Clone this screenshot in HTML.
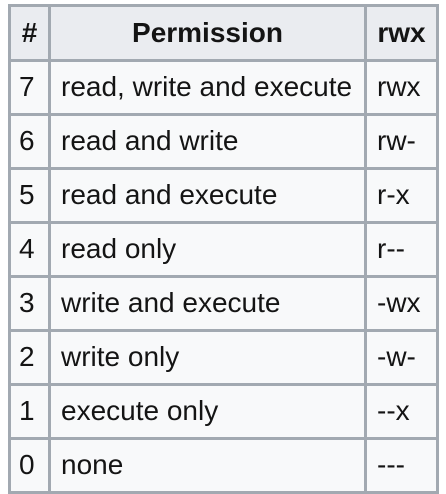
<!DOCTYPE html>
<html><head><style>
body{margin:0;background:#fff;width:446px;height:494px;position:relative;font-family:"Liberation Sans",sans-serif;color:#141414}
.t{position:absolute;left:8px;top:4px;width:431px;height:490px;background:#a2a9b1}
.c{position:absolute;background:#f8f9fa;font-size:28px;line-height:49px;padding-left:10px;box-sizing:border-box;white-space:nowrap}
.h{background:#eaecf0;font-weight:bold;text-align:center;padding-left:0;line-height:51px;font-size:28px}
</style></head><body>
<div class="t"></div>
<div id="g"></div>
<script>
var rows=[["7","read, write and execute","rwx"],["6","read and write","rw-"],["5","read and execute","r-x"],["4","read only","r--"],["3","write and execute","-wx"],["2","write only","-w-"],["1","execute only","--x"],["0","none","---"]];
var xs=[[11,37],[51,313],[367,69]];var h="";
var hd=["#","Permission","rwx"];
for(var j=0;j<3;j++)h+='<div class="c h" style="left:'+xs[j][0]+'px;top:7px;width:'+xs[j][1]+'px;height:52px">'+hd[j]+'</div>';
for(var i=0;i<8;i++){var y=62+i*54;for(var j=0;j<3;j++)h+='<div class="c" style="left:'+xs[j][0]+'px;top:'+y+'px;width:'+xs[j][1]+'px;height:51px;'+(j==0?'padding-left:8px':'')+'">'+rows[i][j]+'</div>';}
document.getElementById("g").innerHTML=h;
</script>
</body></html>
